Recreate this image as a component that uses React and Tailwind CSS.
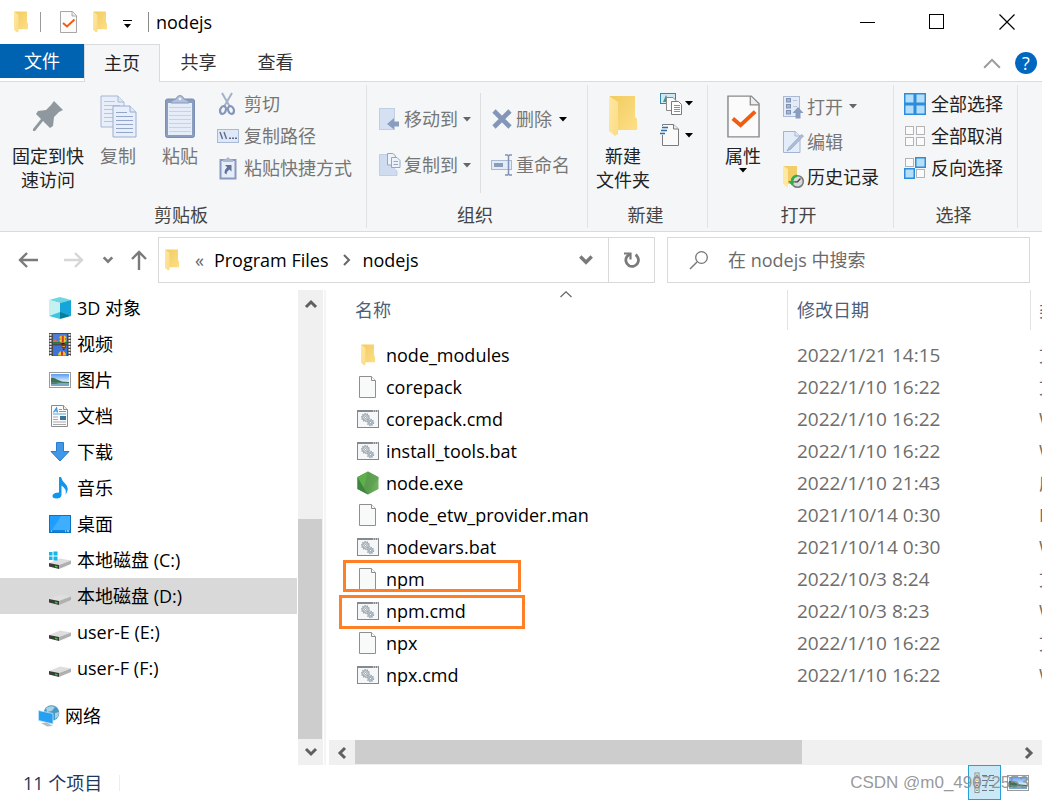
import React from "react";

/* ---------- icons ---------- */

function Folder({ className }) {
  return (
    <svg viewBox="0 0 28 42" className={className} aria-hidden="true" preserveAspectRatio="none">
      <defs>
        <linearGradient id="folderBack" x1="0" y1="0" x2="1" y2="1">
          <stop offset="0" stopColor="#f1cb60" />
          <stop offset="1" stopColor="#fddf86" />
        </linearGradient>
        <linearGradient id="folderFlap" x1="0" y1="0" x2="1" y2="1">
          <stop offset="0" stopColor="#ffe8a2" />
          <stop offset="1" stopColor="#fbdc86" />
        </linearGradient>
      </defs>
      <path d="M1 1H26V22L28 24V35H8Z" fill="url(#folderBack)" />
      <path d="M0 1L9 7V39L6 41L0 36Z" fill="url(#folderFlap)" />
    </svg>
  );
}

function CheckPage({ className }) {
  return (
    <svg viewBox="0 0 34 44" className={className} aria-hidden="true">
      <path d="M1 1H25L33 9V43H1Z" fill="#fbfbfb" stroke="#8a8a8a" strokeWidth="1.5" />
      <path d="M24 1V10H33" fill="#eeeeee" stroke="#8a8a8a" strokeWidth="1.3" />
      <path d="M6 24L14 31L29 17" fill="none" stroke="#f25c0f" strokeWidth="4" />
    </svg>
  );
}

function Pin() {
  return (
    <svg width="30" height="30" viewBox="0 0 30 30" aria-hidden="true">
      <path
        d="M21 0L30 9L26 11L21 16L20 25L17 27L10 20L2 30L0 30L0 28L8 18L3 13L5 10L13 9L18 4Z"
        fill="#8f989f"
      />
    </svg>
  );
}

function CopyPages() {
  const lines = [0, 1, 2, 3, 4, 5];
  return (
    <svg width="37" height="43" viewBox="0 0 37 43" aria-hidden="true">
      <path d="M1 1H18L24 7V32H1Z" fill="#e9effa" stroke="#a6b6d3" />
      <path d="M18 1V7H24" fill="#dfe8f6" stroke="#a6b6d3" />
      {lines.map((i) => (
        <path key={i} d={`M4 ${6.5 + i * 4}H${i < 1 ? 15 : 20}`} stroke="#b7c4dd" />
      ))}
      <path d="M13 11H30L36 17V42H13Z" fill="#e9effa" stroke="#9aacce" />
      <path d="M30 11V17H36" fill="#dfe8f6" stroke="#9aacce" />
      {lines.map((i) => (
        <path key={i} d={`M16 ${17.5 + i * 4}H${i < 1 ? 27 : 33}`} stroke="#94a6c8" />
      ))}
    </svg>
  );
}

function Clipboard() {
  return (
    <svg width="30" height="43" viewBox="0 0 30 43" aria-hidden="true">
      <rect x="0.5" y="4" width="29" height="38.5" rx="2" fill="#8b9dbf" stroke="#7b8eb3" />
      <rect x="3" y="8" width="24" height="32" fill="#e6edf9" />
      {[12, 16, 20, 24, 28, 32, 36].map((y) => (
        <path key={y} d={`M4 ${y + 0.5}H26`} stroke="#c4d2ea" />
      ))}
      <path d="M6 8V6L11 4Q12 0.5 15 0.5T19 4L24 6V8Z" fill="#b3c0d9" stroke="#8698bb" />
      <circle cx="15" cy="4" r="1.3" fill="#eef2fa" />
    </svg>
  );
}

function Scissors() {
  return (
    <svg width="22" height="24" viewBox="0 0 22 24" aria-hidden="true">
      <path d="M5 1L12.5 14M15 1L7.500 14" stroke="#a3b1ca" strokeWidth="2" fill="none" />
      <ellipse cx="6" cy="18" rx="2.800" ry="4" transform="rotate(22 6 18)" fill="none" stroke="#8496b9" strokeWidth="2.2" />
      <ellipse cx="14" cy="18" rx="2.800" ry="4" transform="rotate(-22 14 18)" fill="none" stroke="#8496b9" strokeWidth="2.2" />
    </svg>
  );
}

function PathIcon() {
  return (
    <svg width="22" height="14" viewBox="0 0 22 14" aria-hidden="true">
      <rect x="0.5" y="0.5" width="21" height="13" fill="#dfe8f6" stroke="#a9b8d3" />
      <path d="M3 3L5.5 10M7 3L9.5 10" stroke="#5d6d8d" strokeWidth="1.4" />
      <path d="M12 9.2H14M15 9.2H17M18 9.2H20" stroke="#5d6d8d" strokeWidth="1.6" />
    </svg>
  );
}

function ShortcutClip() {
  return (
    <svg width="22" height="24" viewBox="0 0 22 24" aria-hidden="true">
      <rect x="3.5" y="4" width="15" height="18.5" fill="#e6edf9" stroke="#8799bc" strokeWidth="2" />
      <path d="M6 6V4L9 3Q11 -0.5 13 3L16 4V6Z" fill="#a9b8d3" />
      <path d="M8 9H14.5V15.5L12.3 13.4Q9.8 15 9.5 18.5L7.5 17Q7.5 13.5 10.2 11.3Z" fill="#5f7398" />
    </svg>
  );
}

function MoveTo() {
  return (
    <svg width="22" height="24" viewBox="0 0 22 24" aria-hidden="true">
      <rect x="0.5" y="1.5" width="15" height="21" fill="#d5e1f3" stroke="#c0cee6" />
      <path d="M20 14.5H15V11L8 17L15 22.5V19.5H20Z" fill="#8b9dbf" />
    </svg>
  );
}

function CopyTo() {
  return (
    <svg width="22" height="24" viewBox="0 0 22 24" aria-hidden="true">
      <path d="M0.5 1.5H15.5V16L18 18V22.5H0.5Z" fill="#cfdcf0" stroke="#c0cee6" />
      <path d="M8.500 0.500H14L16.500 3V12H8.500Z" fill="#eef3fb" stroke="#94a6c8" />
      <path d="M12.500 4.500H18L21 7.500V14.500H12.500Z" fill="#eef3fb" stroke="#94a6c8" />
      <path d="M14.500 8.500H19M14.500 11.500H19" stroke="#94a6c8" />
    </svg>
  );
}

function Cross() {
  return (
    <svg width="22" height="22" viewBox="0 0 22 22" aria-hidden="true">
      <path d="M3 3L19 19M19 3L3 19" stroke="#8496b8" strokeWidth="4.6" />
    </svg>
  );
}

function Rename() {
  return (
    <svg width="22" height="22" viewBox="0 0 22 22" aria-hidden="true">
      <rect x="0.500" y="6.500" width="20" height="9" fill="#e3ebf7" stroke="#a9b8d3" />
      <rect x="3" y="9" width="9" height="4" fill="#8b9dbf" />
      <path d="M14 1H16.500L17.500 2L18.500 1H21M17.500 2V20M14 21H16.500L17.500 20L18.500 21H21" stroke="#7f92b6" strokeWidth="1.500" fill="none" />
    </svg>
  );
}

function NewItem() {
  return (
    <svg width="23" height="23" viewBox="0 0 23 23" aria-hidden="true">
      <rect x="0.5" y="1.5" width="15" height="10" fill="#cfe8f5" stroke="#3386ad" />
      <path d="M3 10L6 3L9 10Z" fill="#4f8f8c" />
      <path d="M6.500 5.500H13L16 8.500V18.500H6.500Z" fill="#fbfbfb" stroke="#8a8a8a" />
      <path d="M11.500 9.500H18.500L21.500 12.500V22.500H11.500Z" fill="#ffffff" stroke="#7b7b7b" />
      <path d="M14 13.500H20M14 15.500H20M14 17.500H20M14 19.500H20" stroke="#5b9bd0" />
    </svg>
  );
}

function EasyAccess() {
  return (
    <svg width="23" height="24" viewBox="0 0 23 24" aria-hidden="true">
      <path d="M2.500 1.500H13.500L18.500 6V22.500H2.500Z" fill="#fafafa" stroke="#7b7b7b" />
      <path d="M13.500 1.500V6H18.500" fill="#ececec" stroke="#7b7b7b" />
      <path d="M2 4.500H8M1 7.500H7M0 10.500H5" stroke="#f5f6f7" strokeWidth="3" />
      <path d="M2 4.500H8M1 7.500H7M0 10.500H5" stroke="#2f6fa8" strokeWidth="1.300" />
    </svg>
  );
}

function OpenIcon() {
  return (
    <svg width="22" height="24" viewBox="0 0 22 24" aria-hidden="true">
      <rect x="0.500" y="1.500" width="16" height="20" fill="#e3ebf7" stroke="#aab9d5" />
      {[3.5, 9.5, 15.5].map((y) => (
        <rect key={y} x="3.500" y={y} width="4" height="3.500" fill="#a6b5d0" stroke="#7f92b6" />
      ))}
      <path d="M10 5.500H14M10 11.500H14" stroke="#b8c5dd" />
      <path d="M15 12L20.500 18H17.500V23.500H12.500V18H9.500Z" fill="#8b9dbf" />
    </svg>
  );
}

function EditIcon() {
  return (
    <svg width="22" height="24" viewBox="0 0 22 24" aria-hidden="true">
      <path d="M0.500 1.500H12L17 6V22.500H0.500Z" fill="#e3ecf9" stroke="#a3b4d1" />
      <path d="M12 1.500V6H17" fill="#dfe8f6" stroke="#a3b4d1" />
      <path d="M18.500 4.500L6 17.500L4 21L8 19L20.500 6Z" fill="#aebcd6" stroke="#8fa2c4" strokeWidth="0.700" />
    </svg>
  );
}

function HistoryIcon() {
  return (
    <svg width="22" height="24" viewBox="0 0 22 24" aria-hidden="true">
      <path d="M1 1H14V19H5Z" fill="#f3cd66" />
      <path d="M0 1L5 4V23L0 19Z" fill="#ffe8a2" />
      <circle cx="14.500" cy="16.500" r="5.800" fill="#d9d9d9" stroke="#777777" strokeWidth="1.500" />
      <path d="M17.500 13.500L14.500 16.800H11.500" stroke="#444444" strokeWidth="1.300" fill="none" />
      <path d="M14 9.500Q8 10.500 7.800 16H5L9 20.500L12.500 16H10.500Q10.800 12.500 14 12Z" fill="#2bb04a" />
    </svg>
  );
}

function Tiles({ on }) {
  const cells = [[0, 0], [1, 0], [0, 1], [1, 1]];
  return (
    <svg width="22" height="22" viewBox="0 0 22 22" aria-hidden="true">
      {cells.map(([cx, cy], i) =>
        on[i] ? (
          <rect key={i} x={cx * 11 + 0.75} y={cy * 11 + 0.75} width="9.500" height="9.500" fill="#b5defa" stroke="#2b8ddb" strokeWidth="1.500" />
        ) : (
          <rect key={i} x={cx * 11 + 1.5} y={cy * 11 + 1.5} width="8" height="8" fill="#fbfbfb" stroke="#b4b4b4" />
        )
      )}
    </svg>
  );
}

function Caret({ className }) {
  return (
    <svg width="8" height="5" viewBox="0 0 8 5" className={className} aria-hidden="true">
      <path d="M0 0H8L4 4.500Z" fill="currentColor" />
    </svg>
  );
}

function Chevron({ dir, size = 14, stroke = 3 }) {
  const d = {
    up: "M2 10L7 5L12 10",
    down: "M2 4L7 9L12 4",
    left: "M10 2L5 7L10 12",
    right: "M4 2L9 7L4 12",
  }[dir];
  return (
    <svg width={size} height={size} viewBox="0 0 14 14" aria-hidden="true">
      <path d={d} fill="none" stroke="currentColor" strokeWidth={stroke} />
    </svg>
  );
}

function Arrow({ d, className }) {
  return (
    <svg width="20" height="20" viewBox="0 0 20 20" className={className} aria-hidden="true">
      <path d={d} fill="none" stroke="currentColor" strokeWidth="2.400" />
    </svg>
  );
}

function PageIcon() {
  return (
    <svg width="22" height="24" viewBox="0 0 22 24" aria-hidden="true">
      <path d="M2.500 1.500H14.500L18.500 5.500V22.500H2.500Z" fill="#f8f9f9" stroke="#8f8f8f" />
      <path d="M14.500 1.500V5.500H18.500" fill="#ffffff" stroke="#8f8f8f" />
    </svg>
  );
}

function Gear({ cx, cy, r }) {
  return (
    <g>
      <circle cx={cx} cy={cy} r={r} fill="#e6edf0" stroke="#8e9ca5" strokeWidth="1.600" strokeDasharray="1.300 0.900" />
      <circle cx={cx} cy={cy} r={r - 1} fill="none" stroke="#93a1aa" strokeWidth="0.900" />
      <circle cx={cx} cy={cy} r="1" fill="#ffffff" stroke="#82929c" strokeWidth="0.800" />
    </g>
  );
}

function ScriptIcon() {
  return (
    <svg width="22" height="18" viewBox="0 0 22 18" aria-hidden="true">
      <rect x="0.500" y="0.500" width="21" height="17" fill="#f6f7f8" stroke="#84898e" />
      <path d="M0 1H22" stroke="#84898e" strokeWidth="2" />
      <path d="M16 1H17M18 1H19M20 1H21" stroke="#ffffff" />
      <Gear cx={8.5} cy={7.5} r={3.6} />
      <Gear cx={13.5} cy={12.5} r={2.9} />
    </svg>
  );
}

function NodeIcon() {
  return (
    <svg width="22" height="24" viewBox="0 0 22 24" aria-hidden="true">
      <defs>
        <linearGradient id="nodeSide" x1="0" y1="0" x2="1" y2="0">
          <stop offset="0" stopColor="#3f873f" />
          <stop offset="1" stopColor="#72b45e" />
        </linearGradient>
      </defs>
      <path d="M11 0.500L21.500 6V18L11 23.500L0.500 18V6Z" fill="url(#nodeSide)" />
      <path d="M0.500 6L11 23.500L0.500 18Z" fill="#3e863d" />
      <path d="M0.500 6L11 0.500L7 17Z" fill="#5fb04c" />
      <path d="M11 0.500L21.500 6V8L9 22L7 17Z" fill="#5d9c51" opacity="0.600" />
    </svg>
  );
}

function CubeIcon() {
  return (
    <svg width="22" height="22" viewBox="0 0 22 22" aria-hidden="true">
      <path d="M0 3L11 0L22 3L11 6Z" fill="#6fd6e2" />
      <path d="M0 3L11 6V16L0 19Z" fill="#c5f1f3" />
      <path d="M22 3L11 6V16L22 19Z" fill="#16a5d8" />
      <path d="M0 19L11 15L11 22Z" fill="#3cc8dc" />
      <path d="M22 19L11 15V22Z" fill="#067f9d" />
    </svg>
  );
}

function VideoIcon() {
  return (
    <svg width="22" height="23" viewBox="0 0 22 23" aria-hidden="true">
      <rect width="22" height="23" fill="#4a4a4a" />
      <path d="M1.500 1V23M20.500 1V23" stroke="#f0f0f0" strokeWidth="2" strokeDasharray="1.800 1.200" />
      <rect x="4" y="1" width="14" height="10" fill="#4a7cd8" />
      <rect x="4" y="12.500" width="14" height="10" fill="#3f74d6" />
      <path d="M4 9V7.500L6 6L9 8.500L11 9Z" fill="#e0655c" />
      <path d="M4 9H18V11H4Z" fill="#2f7a3c" />
      <circle cx="13.800" cy="6" r="3.700" fill="#f0c42c" />
      <path d="M13.800 2.300V9.700" stroke="#cf3a2a" strokeWidth="2" />
      <path d="M10.800 5V7M16.800 5V7" stroke="#8a4a1e" strokeWidth="0.800" />
      <path d="M12.500 10H15.500V11.500H12.500Z" fill="#2b1a16" />
      <circle cx="14.800" cy="13.500" r="2.200" fill="#8b2b22" />
      <path d="M13.500 13.500H16" stroke="#e0a92a" />
      <path d="M14.200 16H15.400V17H14.200Z" fill="#2b1a16" />
      <path d="M9 22.500Q9.500 18 13 18T17 22.500Z" fill="#f0c42c" />
      <path d="M13 18V22.500" stroke="#cf3a2a" strokeWidth="2" />
    </svg>
  );
}

function PictureIcon() {
  return (
    <svg width="22" height="16" viewBox="0 0 22 16" aria-hidden="true">
      <defs>
        <linearGradient id="pictureSky" x1="0" y1="0" x2="0" y2="1">
          <stop offset="0" stopColor="#5b9bf0" />
          <stop offset="1" stopColor="#e6f4fd" />
        </linearGradient>
      </defs>
      <rect x="0.500" y="0.500" width="21" height="15" fill="#ffffff" stroke="#9a9a9a" />
      <rect x="2" y="2" width="18" height="8" fill="url(#pictureSky)" />
      <path d="M2 6Q5 5 8 7.500L13 9.500L20 10V11.500H2Z" fill="#3c7351" />
      <path d="M2 10.500L20 11V14H2Z" fill="#7aa8c6" />
      <path d="M2 10.500H12L7 12H2Z" fill="#4d8070" />
    </svg>
  );
}

function DocIcon() {
  return (
    <svg width="22" height="22" viewBox="0 0 22 22" aria-hidden="true">
      <path d="M2.500 0.500H14.500L18.500 4.500V21.500H2.500Z" fill="#fbfbfb" stroke="#8c8c8c" />
      <path d="M14.500 0.500V4.500H18.500" fill="#eeeeee" stroke="#8c8c8c" />
      <path d="M4.500 7.500L7.500 3L8.500 7.500M5.500 6H8" fill="none" stroke="#3795d6" strokeWidth="1.200" />
      <path d="M10 4.500H13M10 6.500H17M4 9H17" stroke="#58a6dc" />
      <path d="M4 12H9M4 14.500H9M4 17H17M4 19.500H17" stroke="#a9a9a9" />
      <rect x="11" y="11" width="6" height="4" fill="#3b729a" />
    </svg>
  );
}

function DownloadIcon() {
  return (
    <svg width="22" height="22" viewBox="0 0 22 22" aria-hidden="true">
      <path d="M7.500 1.500H14.500V10.500H20L11 20L2 10.500H7.500Z" fill="#4098e8" stroke="#2b7cc9" />
    </svg>
  );
}

function MusicIcon() {
  return (
    <svg width="22" height="24" viewBox="0 0 22 24" aria-hidden="true">
      <path d="M10 1H12Q13 5 16.500 8Q21 12.500 16.500 18.500Q18 13 12.500 9.500V19Q12 22.500 7.500 22.500Q3 22.500 3.500 19.500Q4.500 16.500 10 16.500Z" fill="#0f97f0" />
    </svg>
  );
}

function DesktopIcon() {
  return (
    <svg width="22" height="18" viewBox="0 0 22 18" aria-hidden="true">
      <rect x="0.500" y="0.500" width="21" height="17" fill="#1e9fff" stroke="#0b74c4" />
      <path d="M12 1L21 1V15H3Z" fill="#4bb5ff" opacity="0.700" />
      <path d="M1 16H21" stroke="#0a6ab5" />
      <path d="M2 16H3M16 16H17M18 16H20" stroke="#ffffff" />
    </svg>
  );
}

function DriveIcon({ win }) {
  return (
    <svg width="22" height="20" viewBox="0 0 22 20" aria-hidden="true">
      <path d="M0 13L11 8.500L22 10.500L10 15Z" fill="#dedede" />
      <path d="M22 10.500V14L10 19V15Z" fill="#b0b0b0" />
      <path d="M0 13L10 15V19L0 16.500Z" fill="#3a3a3a" />
      <path d="M6 16.300L8.500 17" stroke="#39c635" strokeWidth="1.500" />
      {win && <path d="M0 2H3.500V5.500H0ZM4.500 1.500H8.500V5.500H4.500ZM0 6.500H3.500V10H0ZM4.500 6.500H8.500V10.500H4.500Z" fill="#13b5ea" />}
    </svg>
  );
}

function NetworkIcon() {
  return (
    <svg width="22" height="22" viewBox="0 0 22 22" aria-hidden="true">
      <circle cx="13.500" cy="8" r="7.800" fill="#4a97bf" />
      <path d="M8 3Q12 0 17 2L14 6L9 7ZM17 8L21 7Q21 12 17 14Z" fill="#a5d3e6" />
      <path d="M0.500 5.500L15 8.500V19L0.500 15.500Z" fill="#27a0f2" stroke="#c8e6f8" strokeWidth="0.800" />
      <path d="M3 18L9 17.500L15 21L9 21.500Z" fill="#b5bcc2" />
    </svg>
  );
}

/* ---------- building blocks ---------- */

function BigButton({ icon, lines, muted, caret, className }) {
  return (
    <button type="button" className={`flex flex-col items-center gap-1 pt-[7px] leading-6 ${muted ? "text-[#767676]" : "text-[#222222]"} ${className}`}>
      <span className="flex h-12 items-center justify-center">{icon}</span>
      <span className="flex flex-col items-center whitespace-nowrap">
        {lines.map((l) => (
          <span key={l}>{l}</span>
        ))}
        {caret && <Caret className="text-black" />}
      </span>
    </button>
  );
}

function SmallButton({ icon, label, muted, caret, className }) {
  return (
    <button
      type="button"
      className={`flex items-center whitespace-nowrap ${muted ? "text-[#767676]" : "text-[#222222]"} ${className}`}
    >
      <span className="flex w-[23px] justify-start">{icon}</span>
      <span>{label}</span>
      {caret && <Caret className={caret} />}
    </button>
  );
}

function Group({ label, className, children }) {
  return (
    <section className={`flex shrink-0 flex-col border-r border-[#e0e2e4] ${className}`} aria-label={label}>
      <div className="flex h-[118px]">{children}</div>
      <div className="pr-1 pb-px text-center leading-6 text-[#444444]">{label}</div>
    </section>
  );
}

const navItems = [
  { label: "3D 对象", icon: <CubeIcon /> },
  { label: "视频", icon: <VideoIcon /> },
  { label: "图片", icon: <PictureIcon /> },
  { label: "文档", icon: <DocIcon /> },
  { label: "下载", icon: <DownloadIcon /> },
  { label: "音乐", icon: <MusicIcon /> },
  { label: "桌面", icon: <DesktopIcon /> },
  { label: "本地磁盘 (C:)", icon: <DriveIcon win /> },
  { label: "本地磁盘 (D:)", icon: <DriveIcon />, selected: true },
  { label: "user-E (E:)", icon: <DriveIcon /> },
  { label: "user-F (F:)", icon: <DriveIcon /> },
];

const files = [
  { name: "node_modules", date: "2022/1/21 14:15", type: "文件夹", kind: "folder" },
  { name: "corepack", date: "2022/1/10 16:22", type: "文件", kind: "page" },
  { name: "corepack.cmd", date: "2022/1/10 16:22", type: "Windows 命令脚本", kind: "script" },
  { name: "install_tools.bat", date: "2022/1/10 16:22", type: "Windows 批处理文件", kind: "script" },
  { name: "node.exe", date: "2022/1/10 21:43", type: "应用程序", kind: "node" },
  { name: "node_etw_provider.man", date: "2021/10/14 0:30", type: "MAN 文件", kind: "page" },
  { name: "nodevars.bat", date: "2021/10/14 0:30", type: "Windows 批处理文件", kind: "script" },
  { name: "npm", date: "2022/10/3 8:24", type: "文件", kind: "page", mark: "-top-[3px] left-[14px] h-8 w-[178px]" },
  { name: "npm.cmd", date: "2022/10/3 8:23", type: "Windows 命令脚本", kind: "script", mark: "top-0 left-[10px] h-[34px] w-[186px]" },
  { name: "npx", date: "2022/1/10 16:22", type: "文件", kind: "page" },
  { name: "npx.cmd", date: "2022/1/10 16:22", type: "Windows 命令脚本", kind: "script" },
];

const fileIcons = {
  folder: <Folder className="h-[22px] w-[14px]" />,
  page: <PageIcon />,
  script: <ScriptIcon />,
  node: <NodeIcon />,
};

/* ---------- page sections ---------- */

function TitleBar() {
  return (
    <header className="flex h-11 items-center">
      <Folder className="ml-[14px] h-[22px] w-[14px]" />
      <span className="ml-3 h-5 w-px bg-[#9a9a9a]" />
      <button type="button" aria-label="属性" className="ml-[19px]">
        <CheckPage className="h-[22px] w-[17px]" />
      </button>
      <button type="button" aria-label="新建文件夹" className="ml-4">
        <Folder className="h-[22px] w-[14px]" />
      </button>
      <button type="button" aria-label="自定义快速访问工具栏" className="ml-4 pt-1">
        <svg width="9" height="9" viewBox="0 0 9 9" aria-hidden="true">
          <path d="M0 0.500H9" stroke="#000000" />
          <path d="M1 4H8L4.500 8Z" fill="#000000" />
        </svg>
      </button>
      <span className="ml-4 h-5 w-px bg-[#8a8a8a]" />
      <h1 className="ml-[7px] text-[18px] leading-6 text-black">nodejs</h1>
      <div className="ml-auto flex h-full">
        <button type="button" aria-label="最小化" className="flex w-[70px] items-center justify-center">
          <svg width="15" height="15" viewBox="0 0 15 15" aria-hidden="true"><path d="M0 7.500H15" stroke="#000000" /></svg>
        </button>
        <button type="button" aria-label="最大化" className="flex w-[70px] items-center justify-center">
          <svg width="16" height="16" viewBox="0 0 16 16" aria-hidden="true"><rect x="0.500" y="0.500" width="14" height="14" fill="none" stroke="#000000" /></svg>
        </button>
        <button type="button" aria-label="关闭" className="flex w-[70px] items-center justify-center">
          <svg width="16" height="16" viewBox="0 0 16 16" aria-hidden="true"><path d="M0.500 0.500L15.500 15.500M15.500 0.500L0.500 15.500" stroke="#000000" strokeWidth="1.200" /></svg>
        </button>
      </div>
    </header>
  );
}

function Tabs() {
  return (
    <nav className="flex h-[38px] border-b border-[#dadbdc]">
      <button type="button" className="h-[34px] w-[84px] bg-[#0063b1] text-white">文件</button>
      <button type="button" className="-mb-px w-[76px] border border-b-0 border-[#dadbdc] bg-[#f5f6f7] pb-[2px] text-[#222222]">主页</button>
      <button type="button" className="w-[77px] pb-px text-[#333333]">共享</button>
      <button type="button" className="w-[77px] pb-px text-[#333333]">查看</button>
      <div className="ml-auto flex items-center gap-3 pr-[5px]">
        <button type="button" aria-label="折叠功能区" className="text-[#9b9b9b]">
          <Chevron dir="up" size={22} stroke={1.3} />
        </button>
        <button type="button" aria-label="帮助" className="flex h-[22px] w-[22px] items-center justify-center rounded-full bg-[#0067c0] text-[18px] leading-[22px] text-white">
          ?
        </button>
      </div>
    </nav>
  );
}

function Ribbon() {
  return (
    <div className="flex overflow-hidden border-b border-[#dadbdc] bg-[#f5f6f7] py-[3px]">
      <Group label="剪贴板" className="w-[367px]">
        <BigButton className="ml-3 w-[72px]" icon={<Pin />} lines={["固定到快", "速访问"]} />
        <BigButton className="ml-1 w-[60px]" icon={<CopyPages />} lines={["复制"]} muted />
        <BigButton className="w-16" icon={<Clipboard />} lines={["粘贴"]} muted />
        <div className="ml-[5px] flex flex-col pt-[3px]">
          <SmallButton className="h-8 gap-1" icon={<Scissors />} label="剪切" muted />
          <SmallButton className="h-8 gap-1" icon={<PathIcon />} label="复制路径" muted />
          <SmallButton className="h-8 gap-1" icon={<ShortcutClip />} label="粘贴快捷方式" muted />
        </div>
      </Group>
      <Group label="组织" className="w-[221px]">
        <div className="ml-3 flex flex-col pt-[11px]">
          <SmallButton className="h-[46px] gap-[2px]" icon={<MoveTo />} label="移动到" muted caret="ml-[3px] text-[#666666]" />
          <SmallButton className="h-[46px] gap-[2px]" icon={<CopyTo />} label="复制到" muted caret="ml-[3px] text-[#666666]" />
        </div>
        <span className="mt-2 ml-[9px] h-[100px] w-px bg-[#dcdee0]" />
        <div className="ml-[10px] flex flex-col pt-[11px]">
          <SmallButton className="h-[46px] gap-[2px]" icon={<Cross />} label="删除" muted caret="ml-[5px] text-black" />
          <SmallButton className="h-[46px] gap-[2px]" icon={<Rename />} label="重命名" muted />
        </div>
      </Group>
      <Group label="新建" className="w-[120px]">
        <BigButton className="ml-[6px] w-[58px]" icon={<Folder className="h-[42px] w-7" />} lines={["新建", "文件夹"]} />
        <div className="ml-2 flex flex-col pt-[2px]">
          <button type="button" aria-label="新建项目" className="flex h-8 items-center gap-[2px]"><NewItem /><Caret className="text-black" /></button>
          <button type="button" aria-label="轻松访问" className="flex h-8 items-center gap-[2px]"><EasyAccess /><Caret className="text-black" /></button>
        </div>
      </Group>
      <Group label="打开" className="w-[186px]">
        <BigButton className="ml-[7px] w-[56px]" icon={<CheckPage className="h-[43px] w-[33px]" />} lines={["属性"]} caret />
        <div className="ml-3 flex flex-col pt-1">
          <SmallButton className="h-[35px] gap-px" icon={<OpenIcon />} label="打开" muted caret="ml-[5px] text-[#666666]" />
          <SmallButton className="h-[35px] gap-px" icon={<EditIcon />} label="编辑" muted />
          <SmallButton className="h-[35px] gap-px" icon={<HistoryIcon />} label="历史记录" />
        </div>
      </Group>
      <Group label="选择" className="w-[124px]">
        <div className="ml-[10px] flex flex-col pt-[3px]">
          <SmallButton className="h-8 gap-1" icon={<Tiles on={[1, 1, 1, 1]} />} label="全部选择" />
          <SmallButton className="h-8 gap-1" icon={<Tiles on={[0, 0, 0, 0]} />} label="全部取消" />
          <SmallButton className="h-8 gap-1" icon={<Tiles on={[0, 1, 1, 0]} />} label="反向选择" />
        </div>
      </Group>
    </div>
  );
}

function AddressRow() {
  return (
    <div className="flex h-[58px] items-start pt-[5px] pr-3">
      <div className="flex h-[46px] w-[158px] shrink-0 items-center pl-[18px] text-[#7a7a7a]">
        <button type="button" aria-label="后退"><Arrow d="M9 3L2 10L9 17M2 10H20" /></button>
        <button type="button" aria-label="前进" className="ml-[26px] text-[#d6d6d6]"><Arrow d="M11 3L18 10L11 17M18 10H0" /></button>
        <button type="button" aria-label="最近的位置" className="ml-[18px]"><Chevron dir="down" size={12} stroke={3} /></button>
        <button type="button" aria-label="向上" className="ml-[15px]"><Arrow d="M3 9L10 2L17 9M10 2V20" /></button>
      </div>
      <div className="flex h-[46px] flex-1 items-center border border-[#d9d9d9] pb-px text-black">
        <Folder className="ml-[6px] h-[22px] w-[14px]" />
        <span className="ml-4 text-[#666666]">«</span>
        <button type="button" className="ml-[10px] whitespace-nowrap">Program Files</button>
        <span className="ml-3 flex text-[#666666]"><Chevron dir="right" stroke={2} /></span>
        <button type="button" className="ml-2">nodejs</button>
        <button type="button" aria-label="以前的位置" className="mr-[14px] ml-auto text-[#7a7a7a]"><Chevron dir="down" size={16} stroke={3} /></button>
        <button type="button" aria-label="刷新" className="-mb-px flex h-[44px] w-[46px] items-center justify-center border-l border-[#d9d9d9] text-[#7a7a7a]">
          <svg width="18" height="18" viewBox="0 0 18 18" aria-hidden="true">
            <path d="M12.500 3.800A6.300 6.300 0 1 1 4 5.500L7 3" fill="none" stroke="currentColor" strokeWidth="2.800" />
            <path d="M1 2.500H7.500V8.500" fill="none" stroke="currentColor" strokeWidth="2.200" />
          </svg>
        </button>
      </div>
      <label className="ml-3 flex h-[46px] w-[363px] items-center border border-[#d9d9d9] pl-[21px]">
        <svg width="20" height="20" viewBox="0 0 20 20" aria-hidden="true">
          <circle cx="12.500" cy="7.500" r="5.800" fill="none" stroke="#777777" strokeWidth="1.300" />
          <path d="M8 12L1 19" stroke="#777777" strokeWidth="1.500" />
        </svg>
        <input
          type="search"
          aria-label="搜索"
          placeholder="在 nodejs 中搜索"
          className="ml-[19px] min-w-0 flex-1 bg-transparent outline-none placeholder:text-[#6b6b6b]"
        />
      </label>
    </div>
  );
}

function Sidebar() {
  return (
    <aside className="flex w-[326px] shrink-0 border-r-2 border-[#f5f5f5]">
      <nav className="mr-px flex flex-1 flex-col text-black">
        {navItems.map((item) => (
          <a
            key={item.label}
            href="#"
            className={`flex h-9 items-center gap-[6px] pl-[49px] ${item.selected ? "bg-[#d9d9d9]" : ""}`}
          >
            <span className="flex w-[22px] justify-center">{item.icon}</span>
            <span>{item.label}</span>
          </a>
        ))}
        <a href="#" className="mt-3 flex h-9 items-center gap-[5px] pl-[38px]">
          <NetworkIcon />
          <span>网络</span>
        </a>
      </nav>
      <div className="mr-[1px] flex w-[25px] flex-col bg-[#f0f0f0] text-[#606060]">
        <button type="button" aria-label="向上滚动" className="flex h-[26px] items-center justify-center pt-[2px]"><Chevron dir="up" /></button>
        <div className="flex-[203]" />
        <div className="mr-px flex-[221] bg-[#cdcdcd]" />
        <button type="button" aria-label="向下滚动" className="flex h-[26px] items-center justify-center"><Chevron dir="down" /></button>
      </div>
    </aside>
  );
}

function FilePane() {
  return (
    <main className="ml-[3px] flex min-w-0 flex-1 flex-col overflow-hidden">
      <table className="w-[900px] table-fixed border-collapse text-left">
        <colgroup>
          <col className="w-[459px]" />
          <col className="w-[243px]" />
          <col />
        </colgroup>
        <thead className="text-[#4c607a]">
          <tr className="h-[49px] align-top">
            <th className="p-0 font-normal">
              <div className="relative flex h-10 items-center border-r border-[#e3e3e3] pl-[26px]">
                名称
                <svg width="12" height="7" viewBox="0 0 12 7" className="absolute top-[1px] left-[231px]" aria-hidden="true">
                  <path d="M0.500 6L6 0.800L11.500 6" fill="none" stroke="#666666" strokeWidth="1.200" />
                </svg>
              </div>
            </th>
            <th className="p-0 font-normal">
              <div className="flex h-10 items-center border-r border-[#e3e3e3] pl-[9px]">修改日期</div>
            </th>
            <th className="p-0 font-normal">
              <div className="flex h-10 items-center pl-2">类型</div>
            </th>
          </tr>
        </thead>
        <tbody>
          {files.map((f) => (
            <tr key={f.name} className="h-8">
              <td className="relative p-0 text-black">
                <div className="flex h-8 items-center gap-[7px] pl-7">
                  <span className="flex w-[22px] justify-center">{fileIcons[f.kind]}</span>
                  <span>{f.name}</span>
                </div>
                {f.mark && <span className={`absolute border-[3px] border-[#ff7f27] ${f.mark}`} />}
              </td>
              <td className="p-0 pl-[9px] text-[19px] leading-6 text-[#6d6d6d]">{f.date}</td>
              <td className="p-0 pl-2 whitespace-nowrap text-[#6d6d6d]">{f.type}</td>
            </tr>
          ))}
        </tbody>
      </table>
      <div className="mt-auto flex h-[25px] bg-[#f0f0f0] text-[#606060]">
        <button type="button" aria-label="向左滚动" className="flex w-[26px] items-center justify-center"><Chevron dir="left" /></button>
        <div className="mb-px flex-[447] bg-[#cdcdcd]" />
        <div className="flex-[214]" />
        <button type="button" aria-label="向右滚动" className="flex w-[26px] items-center justify-center"><Chevron dir="right" /></button>
      </div>
    </main>
  );
}

function StatusBar() {
  return (
    <footer className="relative flex h-[35px] items-center pr-[13px]">
      <span className="pl-[23px] text-[#1e395b]">11 个项目</span>
      <span className="ml-[17px] h-4 w-px bg-[#ededed]" />
      <button type="button" aria-label="详细信息" className="ml-auto flex h-[35px] w-[33px] items-center justify-center border border-[#26a0da] bg-[#cbe8f6]">
        <svg width="22" height="22" viewBox="0 0 22 22" aria-hidden="true">
          {["#4f9d6b", "#c8a338", "#c0392b", "#4f9d6b"].map((c, i) => (
            <g key={i}>
              <rect x="1" y={1 + i * 5} width="4" height="4.500" fill="#ffffff" stroke="#8d8d8d" />
              <rect x="2.200" y={2.500 + i * 5} width="1.600" height="1.600" fill={c} />
              <path d={`M8 ${3.5 + i * 5}H13M15 ${3.5 + i * 5}H20`} stroke="#6b7a82" />
            </g>
          ))}
        </svg>
      </button>
      <button type="button" aria-label="大缩略图" className="ml-[6px]"><PictureIcon /></button>
      <span className="pointer-events-none absolute top-2 right-[13px] font-['Liberation_Sans',sans-serif] text-[17px] leading-5 text-[#8c8c8c]/90">
        CSDN @m0_49072553
      </span>
    </footer>
  );
}

export default function App() {
  return (
    <div className="flex min-h-screen flex-col overflow-hidden bg-white font-['Open_Sans','Noto_Sans_CJK_SC',sans-serif] text-[18px] leading-6">
      <TitleBar />
      <Tabs />
      <Ribbon />
      <AddressRow />
      <div className="flex flex-1">
        <Sidebar />
        <FilePane />
      </div>
      <StatusBar />
    </div>
  );
}
